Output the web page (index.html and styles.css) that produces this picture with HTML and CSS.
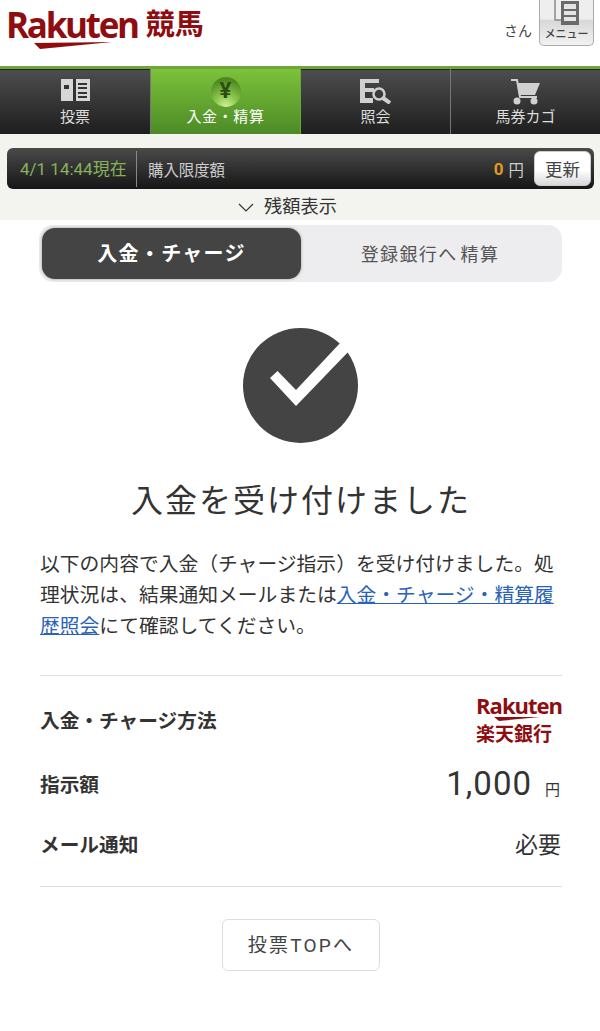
FILE: index.html
```html
<!DOCTYPE html>
<html lang="ja">
<head>
    <meta charset="UTF-8">
    <meta name="viewport" content="width=device-width, initial-scale=1.0">
    <title>入金を受け付けました</title>
    <link rel="stylesheet" href="styles.css">
</head>
<body>

<header class="site-header">
    <div class="logo">
        <div class="logo-word">
            <span class="logo-rakuten">Rakuten</span>
            <svg class="logo-swoosh" width="78" height="7" viewBox="0 0 78 7"><polygon points="0,1 78,0 6,7" fill="#8f0c10"/></svg>
        </div>
        <span class="logo-keiba">競馬</span>
    </div>
    <div class="user-area">
        <span class="user-name">さん</span>
        <div class="menu-button">
            <svg class="menu-icon" width="26" height="26" viewBox="0 0 26 26">
                <path d="M1 0V20H7" fill="none" stroke="#8a8a8a" stroke-width="1.5"/>
                <rect x="7" y="1" width="18" height="24" fill="#6a6a6a"/>
                <rect x="10" y="4" width="12" height="5" fill="#e4e4e4"/>
                <rect x="10" y="11" width="12" height="4" fill="#e4e4e4"/>
                <rect x="10" y="17" width="12" height="4" fill="#e4e4e4"/>
            </svg>
            <span class="menu-label">メニュー</span>
        </div>
    </div>
</header>

<nav class="main-nav">
    <a class="nav-item">
        <span class="nav-icon">
            <svg width="29" height="22" viewBox="0 0 29 22">
                <rect width="29" height="22" fill="#d6d6d6"/>
                <rect x="12" y="0" width="3" height="22" fill="#333"/>
                <rect x="3" y="6" width="5" height="4" fill="#333"/>
                <rect x="17" y="4" width="9" height="2" fill="#333"/>
                <rect x="17" y="8" width="9" height="2" fill="#333"/>
                <rect x="17" y="13" width="9" height="2" fill="#333"/>
                <rect x="17" y="17" width="9" height="2" fill="#333"/>
            </svg>
        </span>
        <span>投票</span>
    </a>
    <a class="nav-item active">
        <span class="yen-coin">¥</span>
        <span>入金・精算</span>
    </a>
    <a class="nav-item">
        <span class="nav-icon">
            <svg width="31" height="25" viewBox="0 0 31 25">
                <path d="M0 0H19V4H5V9H14V13H5V19H13V24H0Z" fill="#d0d0d0"/>
                <circle cx="19" cy="15" r="5.5" fill="none" stroke="#d0d0d0" stroke-width="2.5"/>
                <path d="M23 19L30 24" stroke="#d0d0d0" stroke-width="4"/>
            </svg>
        </span>
        <span>照会</span>
    </a>
    <a class="nav-item">
        <span class="nav-icon">
            <svg width="31" height="26" viewBox="0 0 31 26">
                <path d="M1 1H7L10 18H27" fill="none" stroke="#d0d0d0" stroke-width="2"/>
                <path d="M7 4H30L25 16H9Z" fill="#d0d0d0"/>
                <circle cx="7" cy="22" r="3.5" fill="#d0d0d0"/>
                <circle cx="24" cy="22" r="3.5" fill="#d0d0d0"/>
            </svg>
        </span>
        <span>馬券カゴ</span>
    </a>
</nav>

<section class="balance-area">
    <div class="balance-bar">
        <span class="balance-time">4/1 14:44現在</span>
        <span class="balance-label">購入限度額</span>
        <span class="balance-value">0</span>
        <span class="balance-unit">円</span>
        <button class="refresh-button">更新</button>
    </div>
    <div class="balance-toggle">
        <svg width="16" height="9" viewBox="0 0 16 9"><path d="M1 1L8 8L15 1" fill="none" stroke="#333" stroke-width="1.2"/></svg>
        <span>残額表示</span>
    </div>
</section>

<main class="content">
    <div class="tabs">
        <div class="tab tab-active">入金・チャージ</div>
        <div class="tab">登録銀行へ 精算</div>
    </div>

    <svg class="done-icon" width="115" height="115" viewBox="0 0 115 115">
        <circle cx="57.5" cy="57.5" r="57.5" fill="#444"/>
        <polygon points="27,50 34.5,43 53,62 99,13 107,22 53,78" fill="#fff"/>
    </svg>

    <h1 class="done-title">入金を受け付けました</h1>

    <p class="done-text">以下の内容で入金（チャージ指示）を受け付けました。処理状況は、結果通知メールまたは<a href="#">入金・チャージ・精算履歴照会</a>にて確認してください。</p>

    <dl class="detail-list">
        <div class="detail-row row-method">
            <dt>入金・チャージ方法</dt>
            <dd class="bank-logo">
                <span class="bank-rakuten">Rakuten</span>
                <svg class="bank-swoosh" width="46" height="4" viewBox="0 0 46 4"><polygon points="0,0 46,0 5,4" fill="#8f0c10"/></svg>
                <span class="bank-name">楽天銀行</span>
            </dd>
        </div>
        <div class="detail-row row-amount">
            <dt>指示額</dt>
            <dd><span class="amount">1,000</span><span class="amount-unit">円</span></dd>
        </div>
        <div class="detail-row row-mail">
            <dt>メール通知</dt>
            <dd class="mail-value">必要</dd>
        </div>
    </dl>

    <div class="actions">
        <a class="top-button">投票TOPへ</a>
    </div>
</main>

</body>
</html>
```

FILE: styles.css
```css
* {
    box-sizing: border-box;
}

body {
    font-family: Roboto, "Noto Sans CJK JP", sans-serif;
    background-color: #fff;
    margin: 0;
    color: #333;
}

a {
    text-decoration: none;
}

.site-header {
    height: 66px;
    display: flex;
    justify-content: space-between;
    overflow: hidden;
    padding: 0 6px 0 6px;
}

.logo {
    display: flex;
    align-items: flex-start;
    gap: 8px;
    color: #8f0c10;
    padding-top: 6px;
}

.logo-word {
    display: flex;
    flex-direction: column;
    align-items: flex-start;
}

.logo-rakuten {
    font-family: "Open Sans", sans-serif;
    font-size: 35px;
    font-weight: 700;
    line-height: 37px;
    letter-spacing: -2.3px;
}

.logo-swoosh {
    margin: -1px 0 0 28px;
}

.logo-keiba {
    font-size: 29px;
    font-weight: 700;
    line-height: 36px;
    margin-top: 1px;
}

.user-area {
    display: flex;
    align-items: flex-start;
    gap: 7px;
}

.user-name {
    font-size: 14px;
    color: #444;
    margin-top: 20px;
}

.menu-button {
    width: 55px;
    height: 46px;
    border: 1px solid #aaa;
    border-top: none;
    border-radius: 0 0 5px 5px;
    background: linear-gradient(#eee 42%, #d8d8d8 46%, #f2f2f2);
    display: flex;
    flex-direction: column;
    align-items: center;
    overflow: hidden;
}

.menu-icon {
    flex: none;
}

.menu-label {
    font-size: 11px;
    font-weight: 500;
    color: #444;
    line-height: 14px;
    margin-top: 2px;
}

.main-nav {
    height: 68px;
    border-top: 3px solid #6fa63a;
    display: grid;
    grid-template-columns: 151px 150px 150px 149px;
    background: linear-gradient(#4e4e4e, #1e1e1e);
    box-shadow: inset 0 1px 0 #222;
}

.nav-item {
    display: flex;
    flex-direction: column;
    align-items: center;
    color: #ddd;
    font-size: 15px;
    line-height: 20px;
    padding-top: 8px;
    border-right: 1px solid #777;
}

.nav-item:last-child {
    border-right: none;
}

.nav-item.active {
    background: linear-gradient(#7cc23a, #4c8a26);
    color: #fff;
    letter-spacing: 0.6px;
    border-right: 1px solid #6fa63a;
}

.nav-icon {
    height: 30px;
    padding-top: 2px;
}

.nav-icon svg {
    display: block;
}

.yen-coin {
    width: 30px;
    height: 30px;
    border-radius: 50%;
    background: radial-gradient(circle at 50% 100%, #d4f29c, #8cc850 35%, #4f8a1e 80%);
    color: #2c4c12;
    font-size: 22px;
    font-weight: 700;
    line-height: 28px;
    letter-spacing: 0;
    text-align: center;
}

.balance-area {
    height: 86px;
    background-color: #f3f3ef;
    padding: 14px 6px 0 7px;
}

.balance-bar {
    height: 41px;
    border-radius: 6px;
    background: linear-gradient(#4a4a4a, #161616);
    display: flex;
    align-items: center;
    padding-right: 3px;
    color: #ccc;
    font-size: 15.4px;
}

.balance-time {
    color: #86b25c;
    font-size: 17px;
    width: 130px;
    padding-left: 13px;
    line-height: 36px;
    border-right: 1px solid #888;
}

.balance-label {
    flex: 1;
    padding-left: 11px;
}

.balance-value {
    color: #e09a20;
    font-size: 17px;
    font-weight: 700;
    margin-right: 5px;
}

.balance-unit {
    margin-right: 10px;
}

.refresh-button {
    width: 57px;
    height: 35px;
    border: 1px solid #ccc;
    border-radius: 6px;
    padding: 0;
    font-family: inherit;
    font-size: 17.5px;
    color: #444;
    background: linear-gradient(#fff 55%, #d8d8d8);
}

.balance-toggle {
    display: flex;
    align-items: center;
    justify-content: center;
    gap: 10px;
    margin: 6px 26px 0 0;
    font-size: 18.2px;
    line-height: 24px;
}

.content {
    padding: 5px 38px 0 40px;
}

.tabs {
    display: flex;
    height: 57px;
    margin-left: -1px;
    background-color: #ededef;
    border-radius: 14px;
    padding: 3px;
}

.tab {
    flex: 1;
    display: flex;
    align-items: center;
    justify-content: center;
    font-size: 18px;
    color: #555;
    letter-spacing: 1.4px;
    word-spacing: -3px;
    padding-bottom: 2px;
}

.tab-active {
    flex: none;
    width: 259px;
    background-color: #444;
    color: #fff;
    font-weight: 700;
    font-size: 20px;
    letter-spacing: 1.3px;
    border-radius: 13px;
    box-shadow: 0 0 3px #999;
}

.done-icon {
    display: block;
    margin: 46px 0 0 203px;
}

.done-title {
    font-size: 32px;
    font-weight: 400;
    letter-spacing: 2px;
    text-align: center;
    line-height: 44px;
    margin: 36px 0 0;
}

.done-text {
    font-size: 19.8px;
    line-height: 31px;
    margin: 26px 0 0;
    color: #333;
}

.done-text a {
    color: #2a62b8;
    text-decoration: underline;
}

.detail-list {
    margin: 33px 0 0;
    border-top: 1px solid #ddd;
    border-bottom: 1px solid #ddd;
    height: 212px;
    padding-top: 17px;
}

.detail-row {
    display: flex;
    justify-content: space-between;
    align-items: center;
}

.detail-row dt {
    font-size: 19.7px;
    font-weight: 700;
}

.detail-row dd {
    margin: 0;
}

.row-method {
    height: 52px;
}

.row-amount {
    height: 58px;
    margin-top: 9px;
}

.row-amount dd {
    padding-right: 2px;
}

.row-mail {
    height: 50px;
    margin-top: 6px;
}

.bank-logo {
    display: flex;
    flex-direction: column;
    align-items: flex-start;
    color: #8f0c10;
}

.bank-rakuten {
    font-family: "Open Sans", sans-serif;
    font-size: 22px;
    font-weight: 700;
    line-height: 24px;
    letter-spacing: -1px;
}

.bank-swoosh {
    margin: 0 0 3px 18px;
}

.bank-name {
    font-size: 19px;
    font-weight: 700;
    line-height: 21px;
}

.amount {
    font-size: 33px;
    letter-spacing: 1px;
}

.amount-unit {
    font-size: 15px;
    margin-left: 13px;
}

.detail-row .mail-value {
    font-size: 23px;
    padding-right: 1px;
}

.actions {
    display: flex;
    justify-content: center;
    margin-top: 32px;
}

.top-button {
    width: 158px;
    height: 52px;
    display: flex;
    align-items: center;
    justify-content: center;
    border: 1px solid #ddd;
    border-radius: 6px;
    padding-bottom: 3px;
    font-size: 19px;
    letter-spacing: 2.2px;
    color: #444;
}
```
